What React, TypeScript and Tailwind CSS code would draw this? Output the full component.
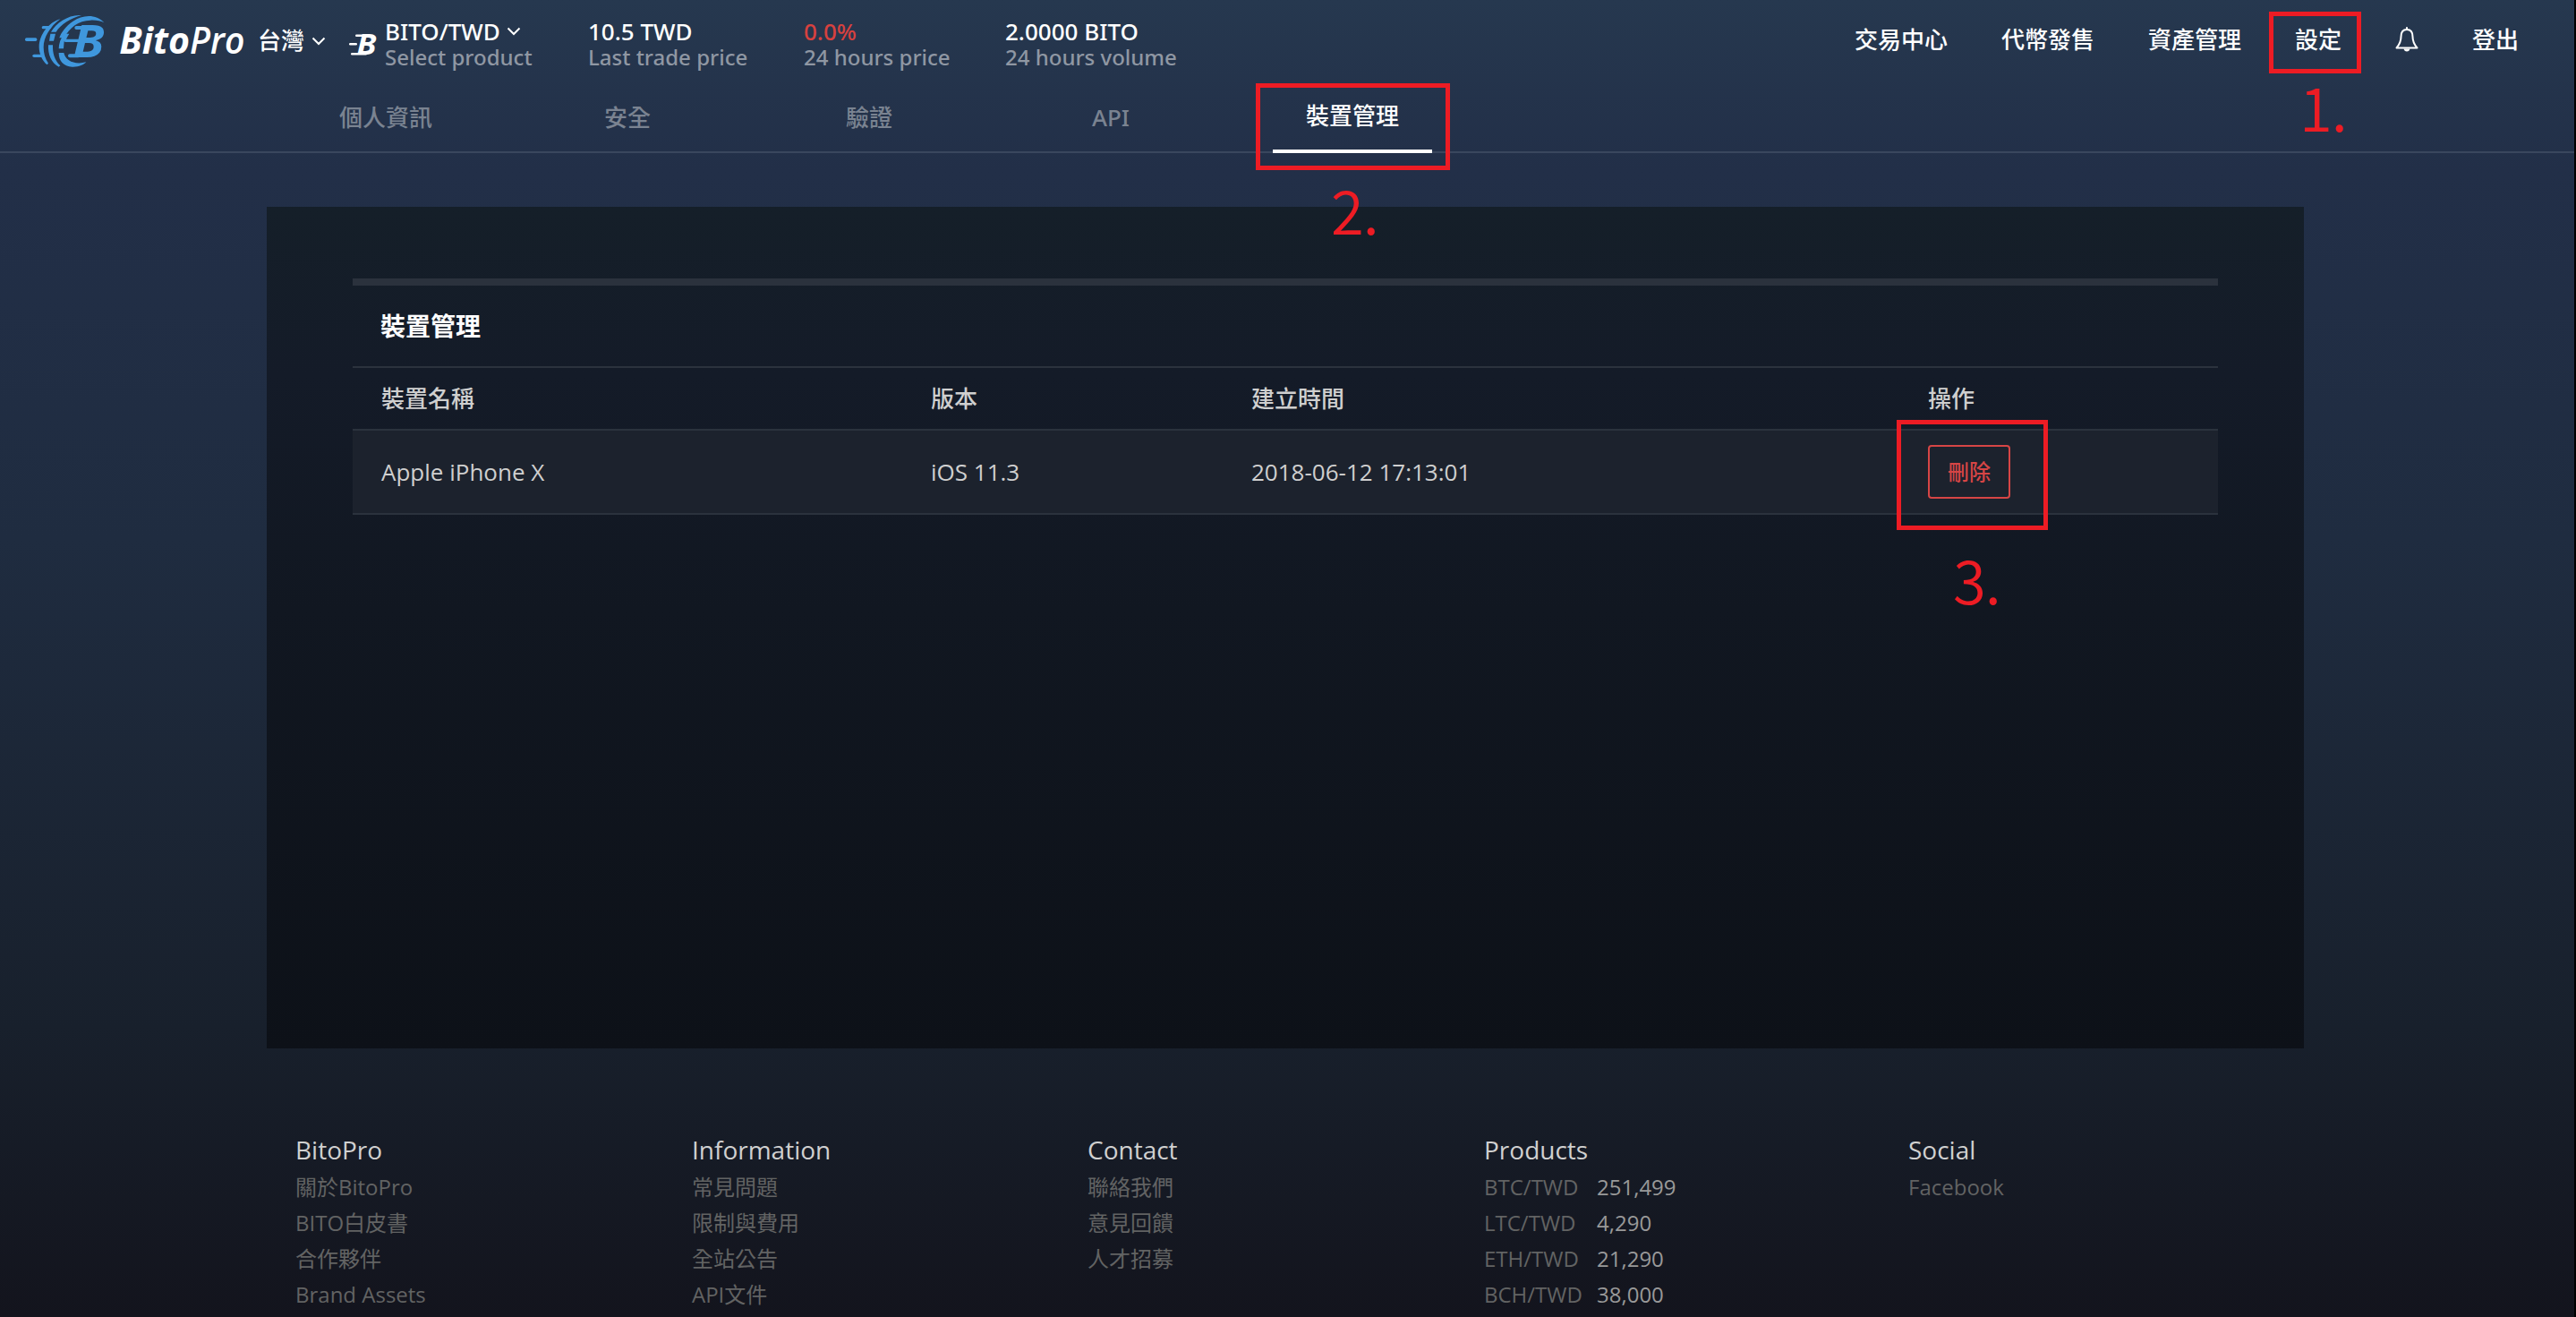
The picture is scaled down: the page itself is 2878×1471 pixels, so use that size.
import { ReactNode } from "react";

interface Stat {
  value: string;
  label: string;
  width: string;
  color?: string;
}

interface FooterColumn {
  title: string;
  width: string;
  links: { label: string; price?: string }[];
}

const STATS: Stat[] = [
  { value: "10.5 TWD", label: "Last trade price", width: "w-[241px]" },
  {
    value: "0.0%",
    label: "24 hours price",
    width: "w-[225px]",
    color: "text-[#d6413f]",
  },
  { value: "2.0000 BITO", label: "24 hours volume", width: "w-[200px]" },
];

const TABS = ["個人資訊", "安全", "驗證", "API", "裝置管理"];
const ACTIVE_TAB = "裝置管理";

const DEVICES = [
  { name: "Apple iPhone X", version: "iOS 11.3", createdAt: "2018-06-12 17:13:01" },
];

const FOOTER: FooterColumn[] = [
  {
    title: "BitoPro",
    width: "w-[443px]",
    links: [
      { label: "關於BitoPro" },
      { label: "BITO白皮書" },
      { label: "合作夥伴" },
      { label: "Brand Assets" },
    ],
  },
  {
    title: "Information",
    width: "w-[442px]",
    links: [
      { label: "常見問題" },
      { label: "限制與費用" },
      { label: "全站公告" },
      { label: "API文件" },
    ],
  },
  {
    title: "Contact",
    width: "w-[443px]",
    links: [{ label: "聯絡我們" }, { label: "意見回饋" }, { label: "人才招募" }],
  },
  {
    title: "Products",
    width: "w-[474px]",
    links: [
      { label: "BTC/TWD", price: "251,499" },
      { label: "LTC/TWD", price: "4,290" },
      { label: "ETH/TWD", price: "21,290" },
      { label: "BCH/TWD", price: "38,000" },
    ],
  },
  { title: "Social", width: "w-[200px]", links: [{ label: "Facebook" }] },
];

export default function App() {
  return (
    <div className="relative h-[1471px] w-[2878px] overflow-hidden border-r-2 border-black bg-[linear-gradient(180deg,#26384f_0%,#222f48_13%,#1f2c40_41%,#18202c_78%,#13141d_100%)] font-['Open_Sans','Noto_Sans_CJK_TC',sans-serif] text-white">
      <Header />
      <Tabs />

      <main className="mt-[60px] ml-[298px] h-[940px] w-[2276px] bg-[linear-gradient(180deg,#151f29_0%,#141b28_20%,#111721_48%,#0d1118_100%)] px-24 pt-20">
        <DeviceTable />
      </main>

      <footer className="flex pt-[93px] pl-[330px]">
        {FOOTER.map((column) => (
          <FooterLinks key={column.title} column={column} />
        ))}
      </footer>

      {/* Step markers */}
      <div className="absolute top-[13px] left-[2535px] h-[69px] w-[103px] border-[5px] border-[#ed1c24]" />
      <Step className="top-[68px] left-[2569px]">1.</Step>
      <div className="absolute top-[93px] left-[1403px] h-[97px] w-[217px] border-[5px] border-[#ed1c24]" />
      <Step className="top-[183px] left-[1487px]">2.</Step>
      <div className="absolute top-[469px] left-[2119px] h-[123px] w-[169px] border-[5px] border-[#ed1c24]" />
      <Step className="top-[596px] left-[2182px]">3.</Step>
    </div>
  );
}

function Header() {
  return (
    <header className="flex h-[88px] items-center pr-[62px] pl-5 font-['Noto_Sans','Noto_Sans_CJK_TC',sans-serif] text-[26px] font-medium">
      <div className="flex h-full w-[268px] pt-[10px]">
        <Logo />
      </div>
      <div className="flex w-[102px] items-center gap-2 pt-[3px]">
        <span>台灣</span>
        <Chevron />
      </div>
      <div className="flex w-[40px] pt-3">
        <CoinIcon />
      </div>

      {/* Market summary */}
      <div className="w-[227px] self-start pt-[21px]">
        <div className="flex items-center gap-[7px] leading-[28px]">
          BITO/TWD
          <Chevron />
        </div>
        <div className="mt-px text-2xl leading-[28px] text-[#8f97a3]">Select product</div>
      </div>
      {STATS.map((stat) => (
        <div
          key={stat.label}
          className={`${stat.width} shrink-0 self-start pt-[21px] leading-[28px]`}
        >
          <div className={stat.color ?? "text-white"}>{stat.value}</div>
          <div className="mt-px text-2xl leading-[28px] text-[#8f97a3]">{stat.label}</div>
        </div>
      ))}

      <nav className="ml-auto flex items-center gap-[60px] whitespace-nowrap">
        <a>交易中心</a>
        <a>代幣發售</a>
        <a>資產管理</a>
        <a>設定</a>
        <BellIcon />
        <a>登出</a>
      </nav>
    </header>
  );
}

function Tabs() {
  return (
    <div className="flex h-[83px] gap-[92px] border-b-2 border-[#3a475e] pl-[342px] font-['Noto_Sans','Noto_Sans_CJK_TC',sans-serif] text-[26px] font-medium">
      {TABS.map((tab) =>
        tab === ACTIVE_TAB ? (
          <div
            key={tab}
            className="flex h-[83px] w-[178px] items-center justify-center border-b-4 border-white pt-[4px]"
          >
            {tab}
          </div>
        ) : (
          <div
            key={tab}
            className="flex h-[81px] w-[178px] items-center justify-center pt-[6px] text-[#7a8391]"
          >
            {tab}
          </div>
        ),
      )}
    </div>
  );
}

function DeviceTable() {
  return (
    <section className="w-[2084px] border-t-8 border-[#2b323d] text-[26px] text-[#cfcfcf]">
      <h2 className="flex h-[90px] items-center pl-[31px] text-[28px] font-bold text-white">
        裝置管理
      </h2>
      <div className="flex h-[72px] items-center border-y-2 border-[#2b323d] pl-8 font-medium">
        <div className="w-[614px]">裝置名稱</div>
        <div className="w-[358px]">版本</div>
        <div className="w-[756px]">建立時間</div>
        <div>操作</div>
      </div>
      {DEVICES.map((device) => (
        <div
          key={device.name}
          className="flex h-[94px] items-center border-b-2 border-[#2b323d] bg-[#1c222d] pl-8"
        >
          <div className="w-[614px]">{device.name}</div>
          <div className="w-[358px]">{device.version}</div>
          <div className="w-[756px]">{device.createdAt}</div>
          <button className="h-[60px] w-[92px] rounded border-2 border-[#d64545] text-2xl font-medium text-[#d64545]">
            刪除
          </button>
        </div>
      ))}
    </section>
  );
}

function FooterLinks({ column }: { column: FooterColumn }) {
  return (
    <div className={`${column.width} shrink-0`}>
      <h3 className="mb-0.5 text-[28px] leading-10 text-[#d0d0d0]">{column.title}</h3>
      <ul className="text-2xl leading-10 text-[#626363]">
        {column.links.map((link) => (
          <li key={link.label} className="flex">
            <span className={link.price ? "w-[126px]" : ""}>{link.label}</span>
            {link.price && <span className="text-[#999999]">{link.price}</span>}
          </li>
        ))}
      </ul>
    </div>
  );
}

function Step({ className, children }: { className: string; children: ReactNode }) {
  return (
    <div
      className={`absolute font-['Noto_Sans_CJK_TC',sans-serif] text-[67px] leading-[99px] font-[350] tracking-[-1px] text-[#ed1c24] ${className}`}
    >
      {children}
    </div>
  );
}

function Logo() {
  return (
    <svg width="260" height="75" viewBox="0 0 780 225" className="shrink-0">
      <g fill="#3f97dd">
        <rect x="24" y="97" width="40" height="11" rx="5" />
        <rect x="80" y="57" width="32" height="10" rx="5" />
        <rect x="49" y="152" width="34" height="10" rx="5" />
        <path d="M142 34C104 44 71 86 71 128C71 150 82 174 98 187L102 182C91 165 86 148 86 128C86 95 108 59 142 34Z" />
        <path d="M213 21C172 17 128 46 111 77L128 77C143 52 176 31 213 21Z" />
        <path d="M109 83L126 83L120 107L105 107Z" />
        <path d="M102 121L117 121C116 147 122 172 142 190L137 194C112 182 100 152 102 121Z" />
        <path d="M289 46C262 16 217 19 185 41C161 57 144 80 139 97L155 97C173 63 203 38 243 38C262 37 277 40 289 46Z" />
        <path d="M155 83L172 83C165 93 162 101 160 109H155L153 133H137C137 116 143 98 155 83Z" />
        <path d="M137 147L154 147C160 174 190 188 229 178C222 187 202 195 182 194C152 192 137 174 137 147Z" />
        <rect x="156" y="101" width="50" height="10" rx="4" />
        <rect x="190" y="57" width="40" height="12" rx="6" />
        <rect x="168" y="151" width="40" height="12" rx="6" />
      </g>
      <text
        x="184"
        y="163"
        textLength="106"
        lengthAdjust="spacingAndGlyphs"
        className="fill-[#3f97dd] text-[148px] font-bold italic"
      >
        B
      </text>
      <g className="fill-white font-['Open_Sans'] text-[126px] italic">
        <text x="340" y="149" textLength="236" lengthAdjust="spacingAndGlyphs" className="font-bold">
          Bito
        </text>
        <text x="576" y="149" textLength="184" lengthAdjust="spacingAndGlyphs" className="font-semibold">
          Pro
        </text>
      </g>
    </svg>
  );
}

function CoinIcon() {
  return (
    <svg width="31" height="24" viewBox="0 0 31 24" fill="white" className="overflow-visible">
      <rect x="0" y="10" width="9" height="2.6" rx="1.3" />
      <rect x="7" y="0.4" width="14" height="2.6" rx="1.3" />
      <rect x="2" y="21" width="18" height="2.6" rx="1.3" />
      <text x="8.5" y="23.4" textLength="22" lengthAdjust="spacingAndGlyphs" className="text-[32px] font-bold italic">
        B
      </text>
    </svg>
  );
}

function Chevron() {
  return (
    <svg width="16" height="10" viewBox="0 0 16 10" fill="none" stroke="white" strokeWidth="2">
      <path d="M1.5 1.5L8 8L14.5 1.5" />
    </svg>
  );
}

function BellIcon() {
  return (
    <svg width="26" height="28" viewBox="0 0 26 28" fill="none" stroke="white" strokeWidth="2">
      <path d="M13 3C8.500 3 6.500 6.500 6.500 11C6.500 17 4.500 20 1.500 23.500H24.500C21.500 20 19.500 17 19.500 11C19.500 6.500 17.500 3 13 3Z" strokeLinejoin="round" />
      <path d="M13 3V1" strokeLinecap="round" />
      <path d="M9.500 24.500H16.500C16 26.500 14.800 27.500 13 27.500C11.200 27.500 10 26.500 9.500 24.500Z" fill="white" stroke="none" />
    </svg>
  );
}
